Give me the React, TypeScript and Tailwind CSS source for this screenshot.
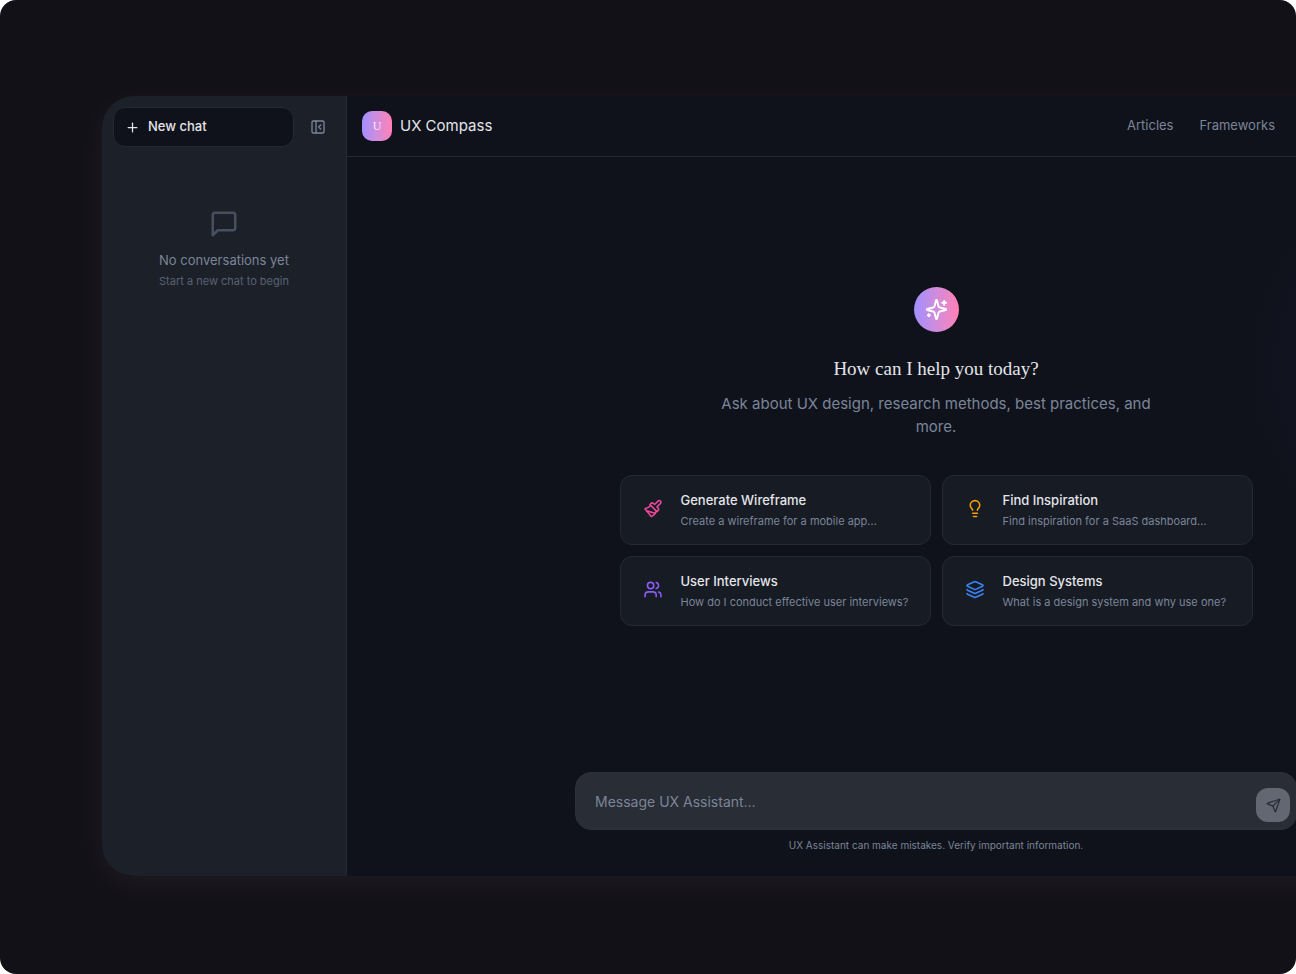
import { Layers, Lightbulb, Paintbrush, PanelLeftClose, Plus, Send, Users } from "lucide-react";

const suggestions = [
    { title: "Generate Wireframe", text: "Create a wireframe for a mobile app…", icon: Paintbrush, color: "text-[#ec4899]" },
    { title: "Find Inspiration", text: "Find inspiration for a SaaS dashboard…", icon: Lightbulb, color: "text-[#f59e0b]" },
    { title: "User Interviews", text: "How do I conduct effective user interviews?", icon: Users, color: "text-[#8b5cf6]" },
    { title: "Design Systems", text: "What is a design system and why use one?", icon: Layers, color: "text-[#3b82f6]" },
];

function ChatIcon({ className }: { className?: string }) {
    return (
        <svg className={className} viewBox="0 0 24 24" fill="none" stroke="currentColor" strokeWidth="2" strokeLinecap="round" strokeLinejoin="round">
            <path d="M21 15a2 2 0 0 1-2 2H7l-4 4V5a2 2 0 0 1 2-2h14a2 2 0 0 1 2 2z" />
        </svg>
    );
}

function SparklesIcon({ className }: { className?: string }) {
    return (
        <svg className={className} viewBox="0 0 24 24" fill="none" stroke="currentColor" strokeWidth="2" strokeLinecap="round" strokeLinejoin="round">
            <path d="M9.937 15.5A2 2 0 0 0 8.5 14.063l-6.135-1.582a.5.5 0 0 1 0-.962L8.5 9.936A2 2 0 0 0 9.937 8.5l1.582-6.135a.5.5 0 0 1 .963 0L14.063 8.5A2 2 0 0 0 15.5 9.937l6.135 1.581a.5.5 0 0 1 0 .964L15.5 14.063a2 2 0 0 0-1.437 1.437l-1.582 6.135a.5.5 0 0 1-.963 0z" />
            <path d="M20 3v4" />
            <path d="M22 5h-4" />
            <path d="M4 17v2" />
            <path d="M5 18H3" />
        </svg>
    );
}

function Sidebar() {
    return (
        <aside className="w-[245px] shrink-0 bg-[#1c2028] border-r border-[#262934] px-[11px] pt-[11px]">
            <div className="flex items-center gap-[7px]">
                <button className="flex-1 h-10 flex items-center gap-2 px-[11px] rounded-xl border border-[#262934] bg-[#0f121a] text-[13px] font-medium text-[#e4e5ea]">
                    <Plus className="w-[15px] h-[15px]" />
                    New chat
                </button>
                <button aria-label="Close sidebar" className="w-[34px] h-10 flex items-center justify-center text-[#7b8599]">
                    <PanelLeftClose className="w-4 h-4" />
                </button>
            </div>
            <div className="mt-[62px] flex flex-col items-center text-center">
                <ChatIcon className="w-[30px] h-[30px] text-[#475060]" />
                <p className="mt-[11px] text-[13px] leading-5 text-[#7b8599]">No conversations yet</p>
                <p className="mt-[3px] text-[11px] leading-4 text-[#5a6273]">Start a new chat to begin</p>
            </div>
        </aside>
    );
}

function Header() {
    return (
        <header className="h-[61px] shrink-0 flex items-center justify-between pl-[15px] pr-[250px] border-b border-[#262934]">
            <div className="flex items-center gap-2">
                <div className="w-[30px] h-[30px] rounded-[10px] bg-linear-to-r from-[#9f8fff] to-[#ff80b5] flex items-center justify-center font-['Liberation_Serif',serif] text-xs text-white/80">
                    U
                </div>
                <span className="text-[15px] text-[#e4e5ea]">UX Compass</span>
            </div>
            <nav className="flex gap-[26px] text-[13px] text-[#7b8599]">
                <a href="#articles">Articles</a>
                <a href="#frameworks">Frameworks</a>
            </nav>
        </header>
    );
}

function Welcome() {
    return (
        <section className="flex-1 flex flex-col items-center pt-[130px]">
            <div className="w-[45px] h-[45px] rounded-full bg-linear-to-r from-[#9f8fff] to-[#ff80b5] flex items-center justify-center">
                <SparklesIcon className="w-[23px] h-[23px] text-white" />
            </div>
            <h1 className="mt-[21px] font-['Liberation_Serif',serif] text-[19px] leading-8 text-[#e4e5ea]">
                How can I help you today?
            </h1>
            <p className="mt-[7px] max-w-[450px] text-center text-[15px] leading-[23px] text-[#7b8599]">
                Ask about UX design, research methods, best practices, and more.
            </p>
            <div className="mt-[37px] w-full max-w-[633px] grid grid-cols-2 gap-[11px]">
                {suggestions.map(({ title, text, icon: Icon, color }) => (
                    <button
                        key={title}
                        className="h-[70px] flex items-start rounded-xl border border-[#262934] bg-[#171b24] pl-[22px] pt-[15px] text-left"
                    >
                        <span className={color}>
                            <Icon className="mt-2 w-5 h-[19px]" />
                        </span>
                        <span className="ml-[18px] flex flex-col gap-[3px]">
                            <span className="text-[13px] leading-[19px] font-medium text-[#e4e5ea]">{title}</span>
                            <span className="text-[11px] leading-4 text-[#7b8599]">{text}</span>
                        </span>
                    </button>
                ))}
            </div>
        </section>
    );
}

function Composer() {
    return (
        <div className="flex flex-col items-center pb-[23px]">
            <form className="w-full max-w-[722px] h-[58px] flex items-center rounded-2xl border border-[#2c303a] bg-[#292d35] pl-[19px] pr-[6px]">
                <input
                    aria-label="Message"
                    placeholder="Message UX Assistant…"
                    className="flex-1 h-full bg-transparent text-[14px] text-[#e4e5ea] placeholder:text-[#7b8599] outline-none"
                />
                <button
                    type="button"
                    aria-label="Send"
                    className="mt-2 w-[34px] h-[34px] rounded-xl bg-[#636771] text-[#292d35] flex items-center justify-center"
                >
                    <Send className="w-[15px] h-[15px]" />
                </button>
            </form>
            <p className="mt-[7px] text-[10px] leading-4 text-[#7b8599]">
                UX Assistant can make mistakes. Verify important information.
            </p>
        </div>
    );
}

export default function App() {
    return (
        <div className="min-h-screen flex overflow-hidden rounded-2xl bg-[#131118] pl-[102px] pt-24 pb-[98px] font-['Inter',sans-serif]">
            {/* the window runs off the right edge of the stage */}
            <div className="flex-1 -mr-[229px] flex overflow-hidden rounded-[32px] bg-[#0f121a] shadow-[0_8px_32px_rgba(255,255,220,0.05)]">
                <Sidebar />
                <main className="relative flex-1 flex flex-col">
                    <div className="absolute right-0 top-[90px] w-[280px] h-[360px] bg-[radial-gradient(closest-side,#14152a,transparent)] pointer-events-none" />
                    <Header />
                    <Welcome />
                    <Composer />
                </main>
            </div>
        </div>
    );
}
